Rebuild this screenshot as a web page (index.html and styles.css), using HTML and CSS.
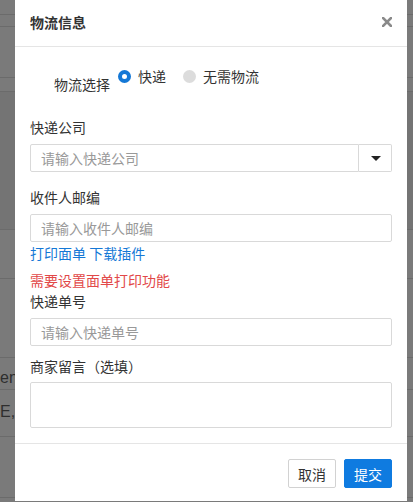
FILE: index.html
```html
<!DOCTYPE html>
<html lang="zh-CN">
<head>
  <meta charset="UTF-8" />
  <meta name="viewport" content="width=device-width, initial-scale=1.0">
  <title>物流信息</title>
  <link rel="stylesheet" href="styles.css">
</head>

<body>
  <div class="pagina">
    <div class="fila f1"></div>
    <div class="fila f2"></div>
    <div class="fila f3"></div>
    <div class="fila f4"></div>
    <div class="fila f5"></div>
    <div class="fila f6"></div>
    <div class="fila f7"></div>
    <div class="fila f8 texto">en</div>
    <div class="fila f9 texto">E,</div>
    <div class="fila f10"></div>
  </div>

  <div class="modal">
    <div class="modal-header">
      <h4 class="modal-titulo">物流信息</h4>
      <span class="cerrar">
        <svg width="10" height="10" viewBox="0 0 10 10"><path d="M1 1 L9 9 M9 1 L1 9" stroke="#8a8a8a" stroke-width="2.6" stroke-linecap="square"/></svg>
      </span>
    </div>

    <div class="modal-body">
      <div class="fila-radio">
        <span class="label-radio">物流选择</span>
        <label class="radio"><span class="circulo activo"></span>快递</label>
        <label class="radio"><span class="circulo"></span>无需物流</label>
      </div>

      <div class="grupo">
        <div class="etiqueta">快递公司</div>
        <div class="input-grupo">
          <input class="campo" type="text" placeholder="请输入快递公司">
          <span class="boton-caret"><i class="caret"></i></span>
        </div>
      </div>

      <div class="grupo">
        <div class="etiqueta">收件人邮编</div>
        <input class="campo" type="text" placeholder="请输入收件人邮编">
        <div class="enlaces"><a href="#">打印面单</a> <a href="#">下载插件</a></div>
        <div class="aviso">需要设置面单打印功能</div>
      </div>

      <div class="grupo-sin">
        <div class="etiqueta">快递单号</div>
        <input class="campo" type="text" placeholder="请输入快递单号">
      </div>

      <div class="grupo-msg">
        <div class="etiqueta">商家留言（选填）</div>
        <textarea class="campo area"></textarea>
      </div>
    </div>

    <div class="modal-footer">
      <button class="btn">取消</button>
      <button class="btn btn-primario">提交</button>
    </div>
  </div>
</body>
</html>
```

FILE: styles.css
```css
* {
  box-sizing: border-box;
}

body {
  margin: 0;
  padding: 0;
  background-color: #7a7a7a;
  font-family: 'Noto Sans CJK SC', 'Liberation Sans', sans-serif;
  font-size: 14px;
  color: #333;
  height: 502px;
  overflow: hidden;
}

/* pagina de fondo, tapada por la capa gris */
.pagina {
  position: absolute;
  top: 0;
  left: 0;
  width: 413px;
}

.fila {
  border-bottom: 1px solid #6b6b6b;
}

.f1 { height: 15px; }
.f2 { height: 12px; }
.f3 { height: 51px; }
.f4 { height: 14px; }
.f5 { height: 138px; background-color: #747474; }
.f6 { height: 49px; }
.f7 { height: 79px; }
.f8 { height: 32px; }
.f9 { height: 47px; }
.f10 { height: 61px; }

.texto {
  color: #2e2e2e;
  font-size: 16px;
  font-family: 'Liberation Sans', sans-serif;
}

.f8 { line-height: 16px; padding-top: 12px; }
.f9 { line-height: 28px; padding-top: 8px; }

.modal {
  position: absolute;
  top: 0;
  left: 15px;
  width: 392px;
  height: 501px;
  background-color: white;
}

.modal-header {
  height: 47px;
  padding: 0 15px;
  border-bottom: 1px solid #e5e5e5;
  display: flex;
  align-items: center;
  justify-content: space-between;
}

.modal-titulo {
  margin: 0;
  font-size: 14px;
  font-weight: bold;
  color: #333;
  line-height: 20px;
  margin-top: -2px;
}

.cerrar {
  display: flex;
  margin-top: -2px;
}

.modal-body {
  padding: 19px 15px 15px;
}

.fila-radio {
  display: flex;
  align-items: flex-start;
  padding-left: 24px;
  height: 51px;
}

.label-radio {
  margin-top: 8px;
  line-height: 20px;
  margin-right: 8px;
}

.radio {
  display: flex;
  align-items: center;
  line-height: 20px;
  margin-right: 17px;
}

.circulo {
  width: 13px;
  height: 13px;
  border-radius: 50%;
  background-color: #dcdcdc;
  margin-right: 7px;
}

.circulo.activo {
  background-color: white;
  border: 4px solid #1478d6;
}

.etiqueta {
  line-height: 20px;
  margin-bottom: 7px;
}

.grupo + .grupo .etiqueta {
  margin-top: 15px;
}

.input-grupo {
  display: flex;
}

.campo {
  display: block;
  width: 100%;
  height: 28px;
  border: 1px solid #d9d9d9;
  border-radius: 2px;
  padding: 0 10px;
  font-family: inherit;
  font-size: 14px;
  color: #333;
  outline: none;
}

.campo::placeholder {
  color: #999;
}

.input-grupo .campo {
  border-radius: 2px 0 0 2px;
}

.boton-caret {
  width: 33px;
  height: 28px;
  flex-shrink: 0;
  border: 1px solid #d9d9d9;
  border-left: none;
  border-radius: 0 2px 2px 0;
  display: flex;
  align-items: center;
  justify-content: center;
}

.caret {
  width: 0;
  height: 0;
  border-left: 5px solid transparent;
  border-right: 5px solid transparent;
  border-top: 5px solid #222;
  margin-left: 2px;
}

.enlaces {
  line-height: 20px;
  margin-top: 1px;
}

.enlaces a {
  color: #1478d6;
  text-decoration: none;
}

.aviso {
  color: #e24848;
  line-height: 20px;
  margin-top: 7px;
}

.grupo-sin .etiqueta {
  margin-top: 1px;
}

.grupo-msg .etiqueta {
  margin-top: 10px;
  margin-bottom: 6px;
}

.area {
  height: 46px;
  resize: none;
}

.modal-footer {
  border-top: 1px solid #e5e5e5;
  padding: 15px;
  display: flex;
  justify-content: flex-end;
  gap: 8px;
}

.btn {
  width: 48px;
  height: 29px;
  border: 1px solid #d2d2d2;
  border-radius: 2px;
  background-color: white;
  color: #333;
  font-family: inherit;
  font-size: 14px;
  padding: 0;
}

.btn-primario {
  background-color: #0f7be0;
  border-color: #0f7be0;
  color: white;
}
```
